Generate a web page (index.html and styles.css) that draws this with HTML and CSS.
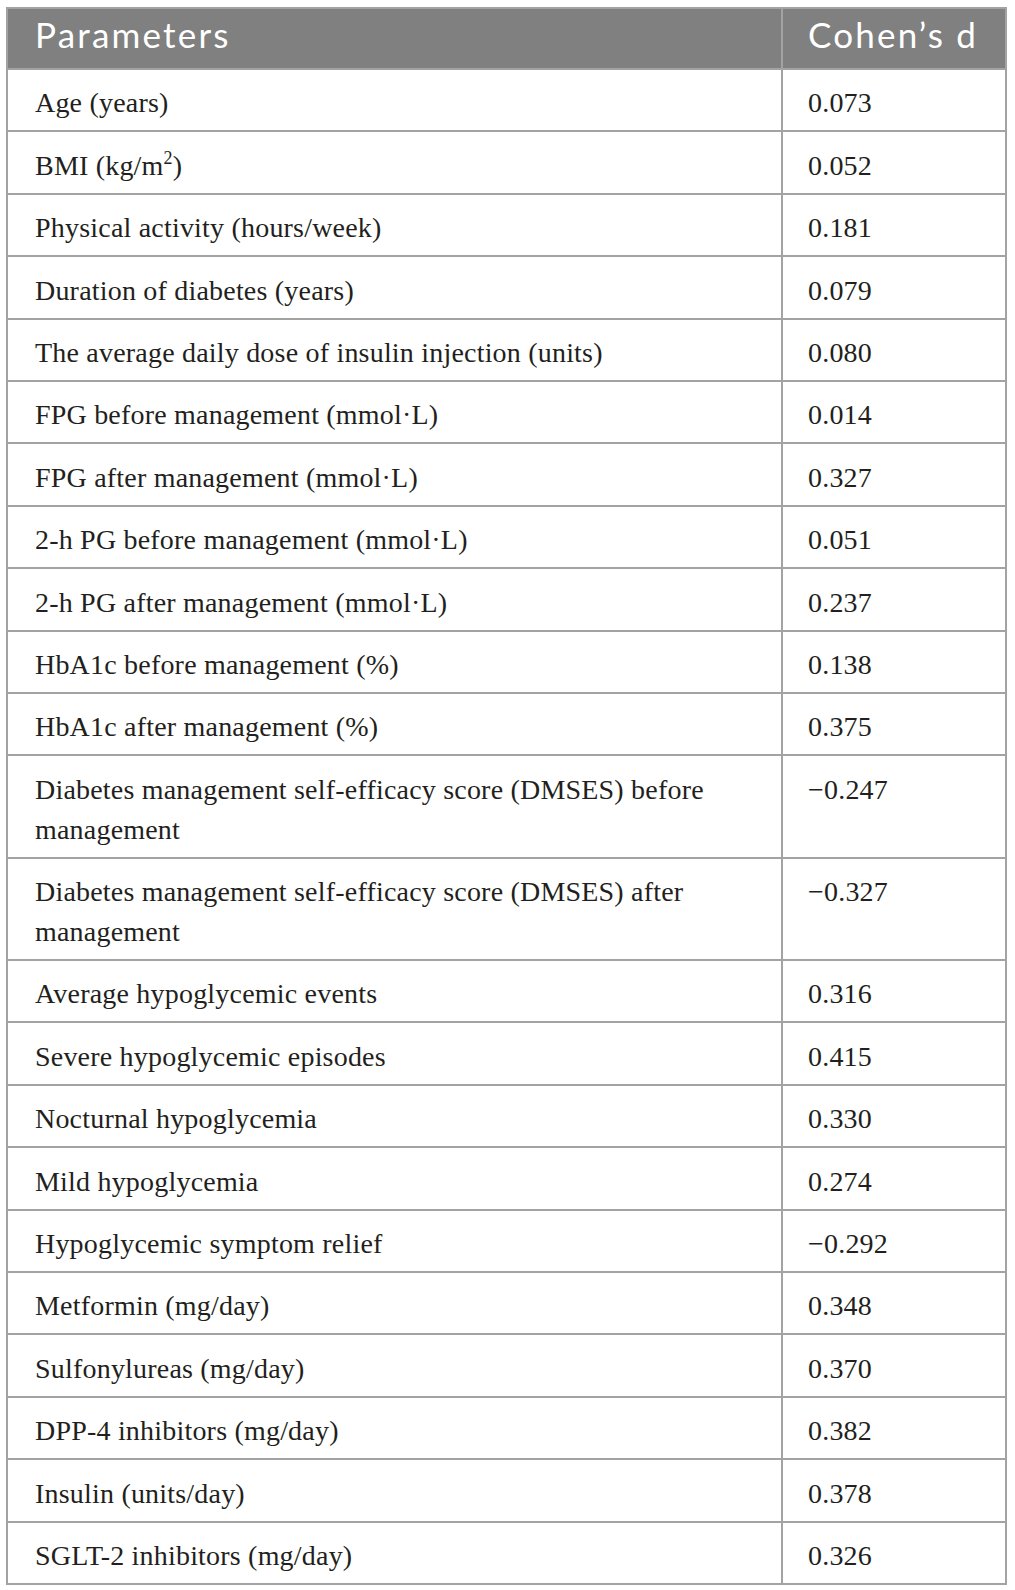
FILE: index.html
```html
<!DOCTYPE html>
<html>
<head>
<meta charset="utf-8">
<link rel="stylesheet" href="styles.css">
</head>
<body>
<table class="tbl">
  <thead>
    <tr><th class="c1">Parameters</th><th class="c2">Cohen’s d</th></tr>
  </thead>
  <tbody>
    <tr><td>Age (years)</td><td>0.073</td></tr>
    <tr><td>BMI (kg/m<sup>2</sup>)</td><td>0.052</td></tr>
    <tr><td>Physical activity (hours/week)</td><td>0.181</td></tr>
    <tr><td>Duration of diabetes (years)</td><td>0.079</td></tr>
    <tr><td>The average daily dose of insulin injection (units)</td><td>0.080</td></tr>
    <tr><td>FPG before management (mmol·L)</td><td>0.014</td></tr>
    <tr><td>FPG after management (mmol·L)</td><td>0.327</td></tr>
    <tr><td>2-h PG before management (mmol·L)</td><td>0.051</td></tr>
    <tr><td>2-h PG after management (mmol·L)</td><td>0.237</td></tr>
    <tr><td>HbA1c before management (%)</td><td>0.138</td></tr>
    <tr><td>HbA1c after management (%)</td><td>0.375</td></tr>
    <tr><td>Diabetes management self-efficacy score (DMSES) before management</td><td>−0.247</td></tr>
    <tr><td>Diabetes management self-efficacy score (DMSES) after management</td><td>−0.327</td></tr>
    <tr><td>Average hypoglycemic events</td><td>0.316</td></tr>
    <tr><td>Severe hypoglycemic episodes</td><td>0.415</td></tr>
    <tr><td>Nocturnal hypoglycemia</td><td>0.330</td></tr>
    <tr><td>Mild hypoglycemia</td><td>0.274</td></tr>
    <tr><td>Hypoglycemic symptom relief</td><td>−0.292</td></tr>
    <tr><td>Metformin (mg/day)</td><td>0.348</td></tr>
    <tr><td>Sulfonylureas (mg/day)</td><td>0.370</td></tr>
    <tr><td>DPP-4 inhibitors (mg/day)</td><td>0.382</td></tr>
    <tr><td>Insulin (units/day)</td><td>0.378</td></tr>
    <tr><td>SGLT-2 inhibitors (mg/day)</td><td>0.326</td></tr>
  </tbody>
</table>
</body>
</html>
```
FILE: styles.css
```css
html, body {
  margin: 0;
  padding: 0;
  background: #ffffff;
}
body {
  padding: 7px 0 0 6px;
}
.tbl {
  border-collapse: collapse;
  width: 1001px;
  table-layout: fixed;
  border: 2px solid #a3a3a3;
}
.tbl th {
  background: #808080;
  color: #ffffff;
  font-family: Lato, "Open Sans", sans-serif;
  font-weight: 400;
  font-size: 35px;
  letter-spacing: 2.2px;
  line-height: 40px;
  text-align: left;
  height: 61px;
  padding: 3px 0 13px 27px;
  box-sizing: border-box;
  border-left: 2px solid #a3a3a3;
  vertical-align: middle;
}
.tbl th.c1 {
  width: 775px;
}
.tbl th.c2 {
  padding-left: 25px;
}
.tbl td {
  font-family: "Liberation Serif", "Times New Roman", serif;
  font-size: 28px;
  letter-spacing: 0.2px;
  line-height: 40px;
  color: #231f20;
  padding: 13.4px 20px 7px 27px;
  border: 2px solid #a3a3a3;
  vertical-align: top;
}
.tbl td + td {
  padding-left: 25px;
}
.tbl sup {
  font-size: 18px;
  line-height: 0;
  vertical-align: 11px;
}
```
